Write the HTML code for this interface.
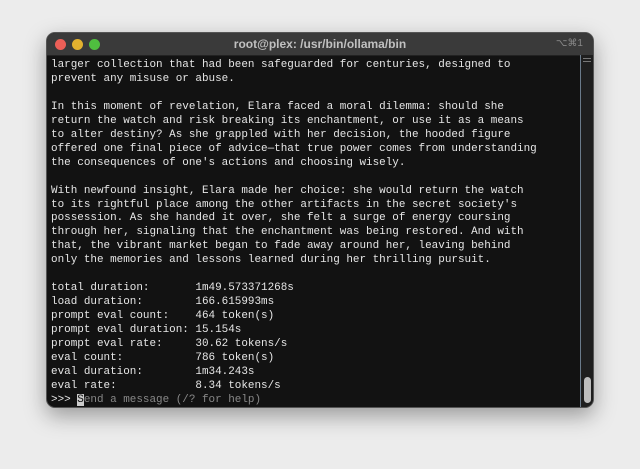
<!DOCTYPE html><html><head><style>
body{margin:0;width:640px;height:469px;background:#ececec;overflow:hidden;position:relative;font-family:"Liberation Sans",sans-serif}
.win{position:absolute;left:46px;top:32px;width:548px;height:376px;border-radius:9px;background:#121212;box-shadow:0 8px 22px rgba(0,0,0,.35);overflow:hidden;border:1px solid #555;box-sizing:border-box}
.tb{height:22px;background:#3a3a3a;position:relative;color:#c0c0c0;font-size:12px;text-align:center;line-height:22px;font-weight:bold;border-bottom:1px solid #222}
.d{position:absolute;top:6px;width:11px;height:11px;border-radius:50%}
.k{position:absolute;right:10px;top:0;font-size:10px;color:#888;font-weight:normal}
pre{margin:0;position:absolute;left:4px;top:26px;font-family:"Liberation Mono",monospace;font-size:10.95px;line-height:13.96px;color:#e6e6e6}
.sb{position:absolute;right:0;top:22px;width:12px;bottom:0;background:#1e1e1e;border-left:1px solid #6a7a8a}
.sb i{position:absolute;left:2px;width:8px;height:1px;background:#777}
.th{position:absolute;right:2px;bottom:4px;width:7px;height:26px;border-radius:4px;background:#bdbdbd}
.cur{background:#ccc;color:#111}
.g{color:#888}
</style></head><body>
<div class="win">
<div class="tb"><span class="d" style="left:8px;background:#ec5f57"></span><span class="d" style="left:25px;background:#e3b12f"></span><span class="d" style="left:42px;background:#4fbf3f"></span>root@plex: /usr/bin/ollama/bin<span class="k">⌥⌘1</span></div>
<pre>larger collection that had been safeguarded for centuries, designed to
prevent any misuse or abuse.

In this moment of revelation, Elara faced a moral dilemma: should she
return the watch and risk breaking its enchantment, or use it as a means
to alter destiny? As she grappled with her decision, the hooded figure
offered one final piece of advice—that true power comes from understanding
the consequences of one's actions and choosing wisely.

With newfound insight, Elara made her choice: she would return the watch
to its rightful place among the other artifacts in the secret society's
possession. As she handed it over, she felt a surge of energy coursing
through her, signaling that the enchantment was being restored. And with
that, the vibrant market began to fade away around her, leaving behind
only the memories and lessons learned during her thrilling pursuit.

total duration:       1m49.573371268s
load duration:        166.615993ms
prompt eval count:    464 token(s)
prompt eval duration: 15.154s
prompt eval rate:     30.62 tokens/s
eval count:           786 token(s)
eval duration:        1m34.243s
eval rate:            8.34 tokens/s
&gt;&gt;&gt; <span class="cur">S</span><span class="g">end a message (/? for help)</span></pre>
<div class="sb"><i style="top:3px"></i><i style="top:6px"></i><div class="th"></div></div>
</div>
</body></html>
